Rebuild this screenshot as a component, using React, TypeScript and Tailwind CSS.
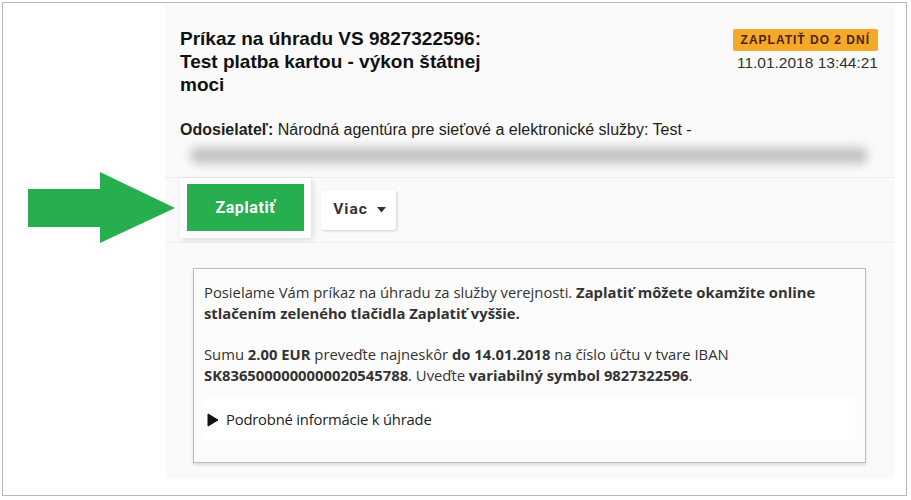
export default function App() {
  return (
    <div className="w-[911px] h-[500px] bg-white pl-[2px] pt-[2px]">
      <div className="w-[905px] h-[494px] border border-[#b8b8b8] bg-white flex flex-col overflow-hidden">
        {/* header */}
        <div className="flex">
          <div className="w-[162px] shrink-0" />
          <div className="w-[730px] bg-[#fafafa] pt-[24px] pl-[15px] pr-[17px] font-['Liberation_Sans',Arial,sans-serif]">
            <div className="flex justify-between items-start">
              <h1 className="w-[330px] text-[19px] leading-[23px] font-bold text-[#111]">
                Príkaz na úhradu VS 9827322596: Test platba kartou - výkon štátnej moci
              </h1>
              <div className="flex flex-col items-end">
                <span className="mt-[2px] h-[22px] px-[8px] flex items-center rounded-[2px] bg-[#f6a829] text-[12px] font-bold tracking-[1px] text-[#4a2308]">
                  ZAPLATIŤ DO 2 DNÍ
                </span>
                <span className="mt-[3px] text-[15.5px] leading-[18px] text-[#333]">11.01.2018 13:44:21</span>
              </div>
            </div>
            <p className="mt-[25px] text-[16px] leading-[18px] text-[#222]">
              <b>Odosielateľ:</b> Národná agentúra pre sieťové a elektronické služby: Test -
            </p>
            <div className="mt-[8px] ml-[10px] mr-[10px] h-[17px] rounded-[8px] bg-[#c4c4c4] blur-[5px]" />
          </div>
        </div>

        {/* spacer + separator */}
        <div className="flex">
          <div className="w-[162px] shrink-0" />
          <div className="w-[730px] h-[14px] bg-[#fafafa] border-b border-[#ececec]" />
        </div>

        {/* buttons row */}
        <div className="flex">
          <div className="w-[162px] shrink-0 relative z-10">
            <svg width="148" height="72" viewBox="0 0 148 72" className="ml-[25px] -mt-[6px] overflow-visible">
              <path d="M0 17 H72 V0 L147 36 L72 71 V55 H0 Z" fill="#27ae4f" />
            </svg>
          </div>
          <div className="w-[730px] h-[65px] bg-[#fafafa] border-b border-[#ececec] pl-[15px] flex items-start font-['Roboto',sans-serif]">
            <div className="bg-white px-[7px] pt-[6px] pb-[7px] shadow-[2px_2px_6px_rgba(0,0,0,0.12)]">
              <button className="w-[117px] h-[47px] bg-[#27ae4f] text-white text-[16px] font-bold tracking-[0.6px]">
                Zaplatiť
              </button>
            </div>
            <button className="ml-[10px] mt-[12px] w-[75px] h-[40px] bg-white rounded-[3px] shadow-[1px_1px_3px_rgba(0,0,0,0.18)] flex items-center justify-center gap-[9px] pl-[2px] text-[15.5px] font-bold tracking-[1px] text-[#333]">
              Viac
              <svg width="9" height="6" viewBox="0 0 9 6">
                <path d="M0 0 H9 L4.5 5.5 Z" fill="#333" />
              </svg>
            </button>
          </div>
        </div>

        {/* content */}
        <div className="flex flex-1">
          <div className="w-[162px] shrink-0" />
          <div className="w-[730px] bg-[#fafafa] pt-[24px] pb-[16px] pl-[28px] self-start">
            <div className="w-[673px] border border-[#bdbdbd] shadow-[0_2px_3px_rgba(0,0,0,0.12)] bg-[#fcfcfc] pt-[13px] pb-[21px] pl-[10px] pr-[10px] font-['Open_Sans',sans-serif] text-[14.8px] leading-[21px] text-[#333]">
              <p>
                Posielame Vám príkaz na úhradu za služby verejnosti.{" "}
                <b>Zaplatiť môžete okamžite online</b>
                <br />
                <b>stlačením zeleného tlačidla Zaplatiť vyššie.</b>
              </p>
              <p className="mt-[20px]">
                Sumu <b>2.00 EUR</b> preveďte najneskôr <b>do 14.01.2018</b> na číslo účtu v tvare IBAN
                <br />
                <b>SK8365000000000020545788</b>. Uveďte <b>variabilný symbol 9827322596</b>.
              </p>
              <div className="mt-[12px] bg-white py-[11px] flex items-center gap-[7px]">
                <svg width="12" height="14" viewBox="0 0 12 14" className="ml-[3px]">
                  <path d="M1 1 L11 7 L1 13 Z" fill="#111" stroke="#111" strokeWidth="1" strokeLinejoin="round" />
                </svg>
                <span className="text-[#222] tracking-[-0.2px]">Podrobné informácie k úhrade</span>
              </div>
            </div>
          </div>
        </div>
      </div>
    </div>
  );
}
